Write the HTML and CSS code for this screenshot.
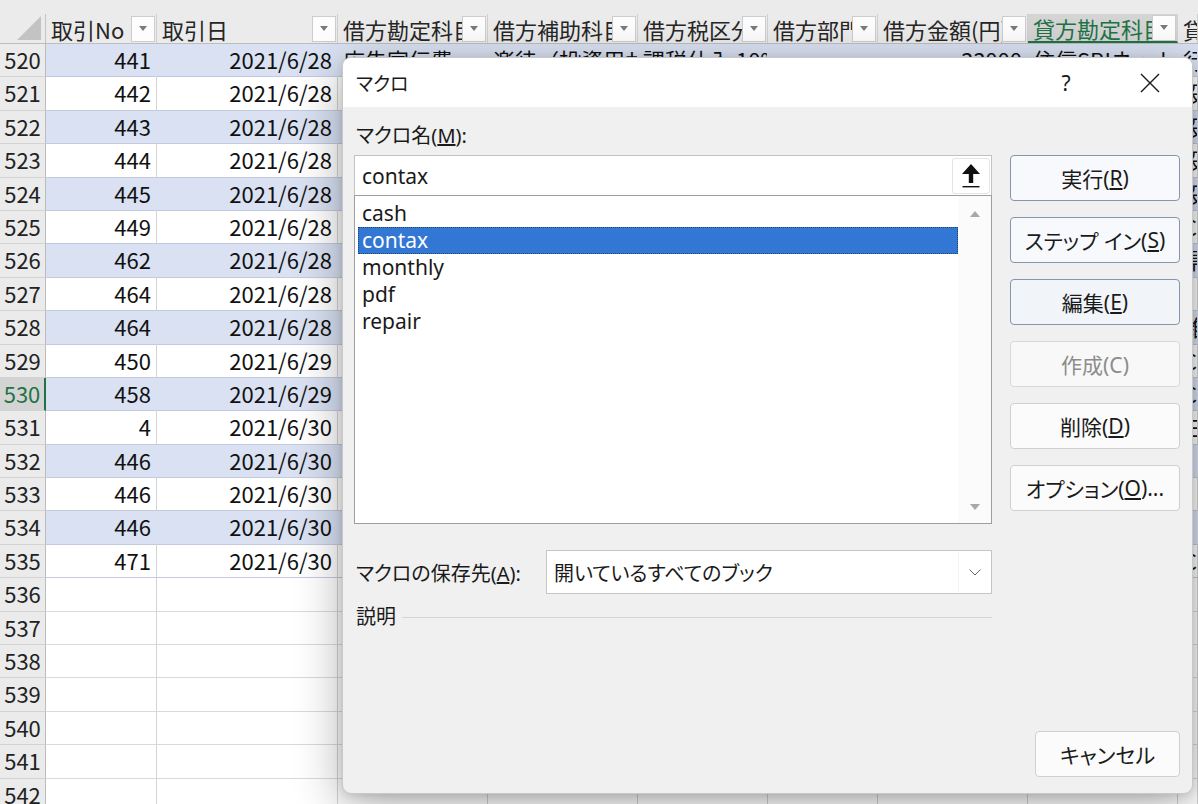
FILE: index.html
```html
<!DOCTYPE html>
<html lang="ja">
<head>
    <meta charset="UTF-8">
    <title>マクロ</title>
    <link rel="stylesheet" href="styles.css">
</head>
<body>
    <div class="sheet">
        <div class="top-strip"></div>
        <div class="row head">
            <div class="corner">
                <svg width="26" height="26" viewBox="0 0 26 26"><polygon points="25,1 25,25 1,25" fill="#c3c3c3"/></svg>
            </div>
            <div class="ch"><span class="lbl">取引No</span><span class="filter"></span></div>
            <div class="ch"><span class="lbl">取引日</span><span class="filter"></span></div>
            <div class="ch"><span class="lbl">借方勘定科目</span><span class="filter"></span></div>
            <div class="ch"><span class="lbl">借方補助科目</span><span class="filter"></span></div>
            <div class="ch"><span class="lbl">借方税区分</span><span class="filter"></span></div>
            <div class="ch"><span class="lbl">借方部門</span><span class="filter"></span></div>
            <div class="ch"><span class="lbl">借方金額(円)</span><span class="filter"></span></div>
            <div class="ch active"><span class="lbl">貸方勘定科目</span><span class="filter"></span></div>
            <div class="ch"><span class="lbl">貸方補助科目</span></div>
        </div>

        <div class="row band">
            <div class="rh">520</div><div class="c num">441</div><div class="c num">2021/6/28</div>
            <div class="c">広告宣伝費</div><div class="c">楽待（投資用サイト）</div><div class="c">課税仕入 10%</div>
            <div class="c"></div><div class="c num">33000</div><div class="c">住信SBIネット銀行</div><div class="c">行</div>
        </div>
        <div class="row">
            <div class="rh">521</div><div class="c num">442</div><div class="c num">2021/6/28</div>
            <div class="c"></div><div class="c"></div><div class="c"></div><div class="c"></div><div class="c"></div><div class="c"></div><div class="c">役員借入金</div>
        </div>
        <div class="row band">
            <div class="rh">522</div><div class="c num">443</div><div class="c num">2021/6/28</div>
            <div class="c"></div><div class="c"></div><div class="c"></div><div class="c"></div><div class="c"></div><div class="c"></div><div class="c">役員借入金</div>
        </div>
        <div class="row">
            <div class="rh">523</div><div class="c num">444</div><div class="c num">2021/6/28</div>
            <div class="c"></div><div class="c"></div><div class="c"></div><div class="c"></div><div class="c"></div><div class="c"></div><div class="c">役員借入金</div>
        </div>
        <div class="row band">
            <div class="rh">524</div><div class="c num">445</div><div class="c num">2021/6/28</div>
            <div class="c"></div><div class="c"></div><div class="c"></div><div class="c"></div><div class="c"></div><div class="c"></div><div class="c">役員借入金</div>
        </div>
        <div class="row">
            <div class="rh">525</div><div class="c num">449</div><div class="c num">2021/6/28</div>
            <div class="c"></div><div class="c"></div><div class="c"></div><div class="c"></div><div class="c"></div><div class="c"></div><div class="c">CF</div>
        </div>
        <div class="row band">
            <div class="rh">526</div><div class="c num">462</div><div class="c num">2021/6/28</div>
            <div class="c"></div><div class="c"></div><div class="c"></div><div class="c"></div><div class="c"></div><div class="c"></div><div class="c">県民共済</div>
        </div>
        <div class="row">
            <div class="rh">527</div><div class="c num">464</div><div class="c num">2021/6/28</div>
            <div class="c"></div><div class="c"></div><div class="c"></div><div class="c"></div><div class="c"></div><div class="c"></div><div class="c"></div>
        </div>
        <div class="row band">
            <div class="rh">528</div><div class="c num">464</div><div class="c num">2021/6/28</div>
            <div class="c"></div><div class="c"></div><div class="c"></div><div class="c"></div><div class="c"></div><div class="c"></div><div class="c">雑収入</div>
        </div>
        <div class="row">
            <div class="rh">529</div><div class="c num">450</div><div class="c num">2021/6/29</div>
            <div class="c"></div><div class="c"></div><div class="c"></div><div class="c"></div><div class="c"></div><div class="c"></div><div class="c">CF</div>
        </div>
        <div class="row band">
            <div class="rh current">530</div><div class="c num">458</div><div class="c num">2021/6/29</div>
            <div class="c"></div><div class="c"></div><div class="c"></div><div class="c"></div><div class="c"></div><div class="c"></div><div class="c">CF</div>
        </div>
        <div class="row">
            <div class="rh">531</div><div class="c num">4</div><div class="c num">2021/6/30</div>
            <div class="c"></div><div class="c"></div><div class="c"></div><div class="c"></div><div class="c"></div><div class="c"></div><div class="c">三井住友</div>
        </div>
        <div class="row band">
            <div class="rh">532</div><div class="c num">446</div><div class="c num">2021/6/30</div>
            <div class="c"></div><div class="c"></div><div class="c"></div><div class="c"></div><div class="c"></div><div class="c"></div><div class="c"></div>
        </div>
        <div class="row">
            <div class="rh">533</div><div class="c num">446</div><div class="c num">2021/6/30</div>
            <div class="c"></div><div class="c"></div><div class="c"></div><div class="c"></div><div class="c"></div><div class="c"></div><div class="c"></div>
        </div>
        <div class="row band">
            <div class="rh">534</div><div class="c num">446</div><div class="c num">2021/6/30</div>
            <div class="c"></div><div class="c"></div><div class="c"></div><div class="c"></div><div class="c"></div><div class="c"></div><div class="c"></div>
        </div>
        <div class="row">
            <div class="rh">535</div><div class="c num">471</div><div class="c num">2021/6/30</div>
            <div class="c"></div><div class="c"></div><div class="c"></div><div class="c"></div><div class="c"></div><div class="c"></div><div class="c">CF</div>
        </div>

        <div class="row empty"><div class="rh">536</div><div class="c"></div><div class="c"></div><div class="c"></div><div class="c"></div><div class="c"></div><div class="c"></div><div class="c"></div><div class="c"></div><div class="c"></div></div>
        <div class="row empty"><div class="rh">537</div><div class="c"></div><div class="c"></div><div class="c"></div><div class="c"></div><div class="c"></div><div class="c"></div><div class="c"></div><div class="c"></div><div class="c"></div></div>
        <div class="row empty"><div class="rh">538</div><div class="c"></div><div class="c"></div><div class="c"></div><div class="c"></div><div class="c"></div><div class="c"></div><div class="c"></div><div class="c"></div><div class="c"></div></div>
        <div class="row empty"><div class="rh">539</div><div class="c"></div><div class="c"></div><div class="c"></div><div class="c"></div><div class="c"></div><div class="c"></div><div class="c"></div><div class="c"></div><div class="c"></div></div>
        <div class="row empty"><div class="rh">540</div><div class="c"></div><div class="c"></div><div class="c"></div><div class="c"></div><div class="c"></div><div class="c"></div><div class="c"></div><div class="c"></div><div class="c"></div></div>
        <div class="row empty"><div class="rh">541</div><div class="c"></div><div class="c"></div><div class="c"></div><div class="c"></div><div class="c"></div><div class="c"></div><div class="c"></div><div class="c"></div><div class="c"></div></div>
        <div class="row empty"><div class="rh">542</div><div class="c"></div><div class="c"></div><div class="c"></div><div class="c"></div><div class="c"></div><div class="c"></div><div class="c"></div><div class="c"></div><div class="c"></div></div>
    </div>

    <!-- macro dialog -->
    <div class="dialog">
        <div class="titlebar">
            <span class="title">マクロ</span>
            <span class="tb-btn help">?</span>
            <span class="tb-btn close">
                <svg width="20" height="20" viewBox="0 0 20 20"><path d="M1 1 L19 19 M19 1 L1 19" stroke="#1a1a1a" stroke-width="1.4" fill="none"/></svg>
            </span>
        </div>
        <div class="body">
            <div class="main">
                <div class="left">
                    <div class="label">マクロ名(<u>M</u>):</div>
                    <div class="name-input">
                        <span class="value">contax</span>
                        <span class="collapse">
                            <svg width="20" height="26" viewBox="0 0 20 26">
                                <polygon points="10,1 19,11 12.2,11 12.2,20 7.8,20 7.8,11 1,11" fill="#111"/>
                                <rect x="1.5" y="23" width="17" height="1.4" fill="#111"/>
                            </svg>
                        </span>
                    </div>
                    <div class="listbox">
                        <div class="items">
                            <div class="item">cash</div>
                            <div class="item selected">contax</div>
                            <div class="item">monthly</div>
                            <div class="item">pdf</div>
                            <div class="item">repair</div>
                        </div>
                        <div class="scroll">
                            <span class="arr up"></span>
                            <span class="arr down"></span>
                        </div>
                    </div>
                    <div class="store">
                        <span class="store-label">マクロの保存先(<u>A</u>):</span>
                        <div class="combo">
                            <span class="value">開いているすべてのブック</span>
                            <span class="drop">
                                <svg width="12" height="7" viewBox="0 0 12 7"><polyline points="0.5,0.5 6,6 11.5,0.5" stroke="#666" stroke-width="1" fill="none"/></svg>
                            </span>
                        </div>
                    </div>
                    <div class="desc">
                        <span>説明</span>
                        <span class="rule"></span>
                    </div>
                </div>
                <div class="right">
                    <div class="btn accent">実行(<u>R</u>)</div>
                    <div class="btn accent">ステップ イン(<u>S</u>)</div>
                    <div class="btn accent hot">編集(<u>E</u>)</div>
                    <div class="btn disabled">作成(C)</div>
                    <div class="btn">削除(<u>D</u>)</div>
                    <div class="btn">オプション(<u>O</u>)...</div>
                </div>
            </div>
            <div class="footer">
                <div class="btn cancel">キャンセル</div>
            </div>
        </div>
    </div>
</body>
</html>
```

FILE: styles.css
```css
body {
    margin: 0;
    width: 1198px;
    height: 804px;
    overflow: hidden;
    position: relative;
    background: #fff;
    font-family: "Noto Sans CJK JP", sans-serif;
    color: #1f1f1f;
}

/* worksheet */
.top-strip {
    height: 14px;
    background: #ebebeb;
}
.row {
    display: grid;
    grid-template-columns: 46px 111px 181px 150px 150px 130px 110px 150px 150px 1fr;
    height: 33.4px;
}
.row > div {
    box-sizing: border-box;
    overflow: hidden;
    white-space: nowrap;
}
.head {
    height: 30px;
    background: #ebebeb;
    border-bottom: 1px solid #bdbdbd;
    box-sizing: border-box;
}
.corner {
    display: flex;
    align-items: flex-end;
    justify-content: flex-end;
    padding: 0 3px 2px 0;
    border-right: 1px solid #c4c4c4;
}
.ch {
    display: flex;
    align-items: center;
    padding-left: 5px;
    border-right: 1px solid #d0d0d0;
    font-size: 22px;
    color: #262626;
}
.ch .lbl {
    flex: 1;
    overflow: hidden;
    white-space: nowrap;
}
.ch.active {
    background: #d4d4d4;
    color: #217346;
    border-bottom: 2px solid #217346;
}
.filter {
    flex: none;
    width: 24px;
    height: 26px;
    margin-right: 1px;
    box-sizing: border-box;
    background: #fdfdfd;
    border: 1px solid #cdcdcd;
    display: flex;
    align-items: center;
    justify-content: center;
}
.filter::after {
    content: "";
    border-left: 4.5px solid transparent;
    border-right: 4.5px solid transparent;
    border-top: 5px solid #7a7a7a;
}
.rh {
    background: #ebebeb;
    border-right: 1px solid #bcbcbc;
    border-bottom: 1px solid #d3d3d3;
    text-align: center;
    font-size: 22px;
    line-height: 31px;
    color: #222;
}
.rh.current {
    background: #d4d4d4;
    color: #217346;
    border-right: 2px solid #217346;
}
.c {
    padding: 0 5px;
    font-size: 22px;
    line-height: 31px;
    color: #111;
    border-right: 1px solid #d4d4d4;
    border-bottom: 1px solid #c3cadc;
}
.c.num {
    text-align: right;
}
.band .c {
    background: #d9e1f2;
    border-right-color: transparent;
}
.empty .c {
    border-bottom-color: #d9d9d9;
}

/* dialog */
.dialog {
    position: absolute;
    left: 342px;
    top: 57px;
    width: 851px;
    height: 737px;
    box-sizing: border-box;
    border: 1px solid #c8c8c8;
    border-radius: 9px;
    overflow: hidden;
    background: #f0f0f0;
    box-shadow: 0 12px 48px rgba(0, 0, 0, 0.32), 0 2px 8px rgba(0, 0, 0, 0.12);
    display: flex;
    flex-direction: column;
    font-family: "Noto Sans", "Noto Sans CJK JP", sans-serif;
    font-feature-settings: "palt";
    color: #1a1a1a;
}
.titlebar {
    height: 49px;
    flex: none;
    background: #fff;
    display: flex;
    align-items: center;
    padding-left: 13px;
}
.title {
    flex: 1;
    font-size: 19px;
}
.tb-btn {
    width: 84px;
    height: 49px;
    display: flex;
    align-items: center;
    justify-content: center;
    font-size: 21px;
}
.body {
    flex: 1;
    display: flex;
    flex-direction: column;
    padding: 17px 12px 16px 11px;
}
.main {
    display: flex;
    gap: 18px;
}
.left {
    width: 638px;
    display: flex;
    flex-direction: column;
}
.label {
    font-size: 20px;
    line-height: 24px;
    padding-left: 2px;
    margin-bottom: 7px;
}
.name-input {
    height: 40px;
    box-sizing: border-box;
    background: #fff;
    border: 1px solid #c2c2c2;
    border-bottom: none;
    display: flex;
    align-items: center;
}
.name-input .value {
    flex: 1;
    padding-left: 7px;
    font-size: 21px;
}
.collapse {
    width: 38px;
    height: 36px;
    margin-right: 1px;
    box-sizing: border-box;
    border: 1px solid #e4e4e4;
    border-radius: 3px;
    display: flex;
    align-items: center;
    justify-content: center;
}
.listbox {
    height: 329px;
    box-sizing: border-box;
    background: #fff;
    border: 1px solid #9e9e9e;
    display: flex;
}
.items {
    flex: 1;
    padding: 4px 0 0 3px;
}
.item {
    height: 27px;
    line-height: 27px;
    padding-left: 4px;
    font-size: 21px;
    box-sizing: border-box;
}
.item.selected {
    background: #3277d3;
    color: #fff;
    outline: 1px dotted #27426a;
    outline-offset: -1px;
}
.scroll {
    width: 33px;
    background: #fbfbfb;
    display: flex;
    flex-direction: column;
    justify-content: space-between;
    align-items: center;
    padding: 15px 0 13px;
}
.arr {
    width: 0;
    height: 0;
    border-left: 5px solid transparent;
    border-right: 5px solid transparent;
}
.arr.up {
    border-bottom: 6px solid #a8a8a8;
}
.arr.down {
    border-top: 6px solid #a8a8a8;
}
.store {
    margin-top: 26px;
    display: flex;
    align-items: center;
}
.store-label {
    width: 192px;
    padding-left: 2px;
    box-sizing: border-box;
    font-size: 20px;
}
.combo {
    flex: 1;
    height: 44px;
    box-sizing: border-box;
    background: #fff;
    border: 1px solid #c6c6c6;
    display: flex;
    align-items: center;
}
.combo .value {
    flex: 1;
    padding-left: 7px;
    font-size: 20px;
}
.drop {
    width: 32px;
    height: 40px;
    border-left: 1px solid #f2f2f2;
    display: flex;
    align-items: center;
    justify-content: center;
}
.desc {
    margin-top: 11px;
    display: flex;
    align-items: center;
    font-size: 20px;
    line-height: 24px;
    padding-left: 2px;
}
.desc .rule {
    flex: 1;
    height: 1px;
    margin-left: 6px;
    background: #d6d6d6;
}
.right {
    width: 170px;
    padding-top: 31px;
    display: flex;
    flex-direction: column;
    gap: 16px;
}
.btn {
    height: 46px;
    box-sizing: border-box;
    border: 1px solid #d0d0d0;
    border-radius: 4px;
    background: #fbfbfb;
    display: flex;
    align-items: center;
    justify-content: center;
    font-size: 21px;
    color: #1a1a1a;
}
.btn.accent {
    border-color: #8595ab;
    background: #f7f9fc;
}
.btn.hot {
    background: #f1f5fa;
}
.btn.disabled {
    color: #8c8c8c;
    border-color: #d9d9d9;
    background: #f8f8f8;
}
.footer {
    margin-top: auto;
    display: flex;
    justify-content: flex-end;
}
.btn.cancel {
    width: 145px;
}
```
